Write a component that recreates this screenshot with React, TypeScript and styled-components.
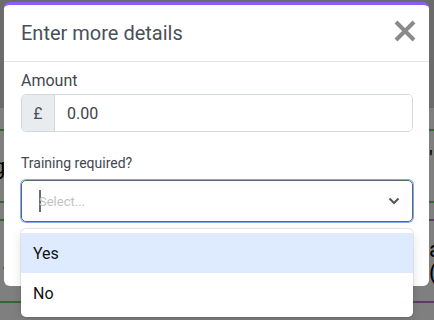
import React from "react";
import styled, { createGlobalStyle } from "styled-components";

const GlobalStyle = createGlobalStyle`
  html, body {
    margin: 0;
    padding: 0;
    overflow: hidden;
  }
  body {
    font-family: Roboto, "Liberation Sans", Arial, sans-serif;
    background: #ffffff;
  }
  * {
    box-sizing: border-box;
  }
`;

// page behind the dialog
const Page = styled.div`
  width: 100%;
  height: 100vh;
  background: #ffffff;
  overflow: hidden;
`;

const TopBand = styled.div`
  height: 108px;
  background: #d6d6d6;
`;

const Row = styled.div<{ h: number }>`
  display: flex;
  height: ${(p) => p.h}px;
`;

const Cell = styled.div<{ line: string; align?: string }>`
  flex: 1;
  display: flex;
  flex-direction: column;
  justify-content: ${(p) => p.align || "center"};
  border-bottom: 2px solid ${(p) => p.line};
  font-size: 22px;
  line-height: 23px;
  color: #000000;
  overflow: hidden;
  white-space: nowrap;
`;

const Frag = styled.span<{ indent: number; top?: number }>`
  margin-left: ${(p) => p.indent}px;
  margin-top: ${(p) => p.top || 0}px;
`;

// dialog
const Overlay = styled.div`
  position: fixed;
  inset: 0;
  background: rgba(0, 0, 0, 0.5);
  padding: 2px 5px 0 4px;
  display: flex;
  align-items: flex-start;
`;

const Modal = styled.div`
  width: 100%;
  background: #ffffff;
  border-radius: 6px;
  border-top: 3px solid #8b5cf6;
  position: relative;
`;

const Header = styled.div`
  display: flex;
  align-items: center;
  justify-content: space-between;
  padding: 16px 12px 16px 17px;
  border-bottom: 1px solid #e3e6ea;
`;

const Title = styled.h2`
  margin: 0;
  font-size: 20px;
  line-height: 24px;
  font-weight: 400;
  color: #4a5059;
`;

const CloseButton = styled.button`
  border: none;
  background: none;
  padding: 0;
  margin-top: -5px;
  display: flex;
  cursor: pointer;
`;

const Body = styled.div`
  padding: 9px 16px 64px 17px;
  display: flex;
  flex-direction: column;
`;

const Label = styled.label<{ size: number; gap: number; top?: number }>`
  font-size: ${(p) => p.size}px;
  line-height: ${(p) => p.size + 3}px;
  color: #42474f;
  margin-top: ${(p) => p.top || 0}px;
  margin-bottom: ${(p) => p.gap}px;
`;

const InputGroup = styled.div`
  display: flex;
  height: 38px;
  border: 1px solid #d3d8de;
  border-radius: 5px;
  overflow: hidden;
`;

const Prefix = styled.span`
  width: 33px;
  display: flex;
  align-items: center;
  justify-content: center;
  background: #e9ecef;
  border-right: 1px solid #d3d8de;
  font-size: 16px;
  color: #4a5059;
`;

const AmountInput = styled.input`
  flex: 1;
  border: none;
  outline: none;
  padding: 0 12px;
  font-family: Roboto, "Liberation Sans", Arial, sans-serif;
  font-size: 16px;
  color: #3d4249;
`;

const SelectWrap = styled.div`
  position: relative;
`;

const Control = styled.div`
  height: 42px;
  display: flex;
  align-items: center;
  justify-content: space-between;
  padding: 0 12px 0 17px;
  border: 1px solid #5b6573;
  border-radius: 5px;
  box-shadow: 0 0 0 1px #7eaef0;
`;

const Placeholder = styled.span`
  display: flex;
  align-items: center;
  font-size: 13px;
  color: #c2c2c2;
`;

const Caret = styled.span`
  width: 2px;
  height: 22px;
  background: #6b6b6b;
  margin-right: -2px;
`;

const Menu = styled.div`
  position: absolute;
  top: calc(100% + 7px);
  left: 0;
  right: 0;
  padding: 4px 0;
  background: #ffffff;
  border-radius: 5px;
  box-shadow: 0 0 0 1px rgba(0, 0, 0, 0.08), 0 4px 11px rgba(0, 0, 0, 0.12);
  z-index: 2;
`;

const Option = styled.div<{ focused?: boolean }>`
  height: 40px;
  display: flex;
  align-items: center;
  padding: 0 12px;
  font-size: 16px;
  color: #111111;
  background: ${(p) => (p.focused ? "#deebff" : "#ffffff")};
`;

const Close = () => (
  <svg width="24" height="24" viewBox="0 0 24 24">
    <path d="M3 3 L21 21 M21 3 L3 21" stroke="#8a8a8a" strokeWidth="4" />
  </svg>
);

const Chevron = () => (
  <svg width="12" height="8" viewBox="0 0 12 8">
    <path d="M1.5 1.5 L6 6 L10.5 1.5" fill="none" stroke="#555555" strokeWidth="2" />
  </svg>
);

export default function App() {
  return (
    <>
      <GlobalStyle />
      <Page>
        <TopBand />
        <Row h={23}>
          <Cell line="#66cc66" />
          <Cell line="#66cc66" />
        </Row>
        <Row h={72}>
          <Cell line="#66cc66">
            <Frag indent={-7}>g</Frag>
          </Cell>
          <Cell line="#66cc66" align="flex-start">
            <Frag indent={212} top={16}>'l</Frag>
          </Cell>
        </Row>
        <Row h={18}>
          <Cell line="#66cc66" />
          <Cell line="#c070d0" />
        </Row>
        <Row h={82}>
          <Cell line="#66cc66">
            <Frag indent={2}>.</Frag>
          </Cell>
          <Cell line="#c070d0">
            <Frag indent={212}>a</Frag>
            <Frag indent={212}>(</Frag>
          </Cell>
        </Row>
      </Page>
      <Overlay>
        <Modal>
          <Header>
            <Title>Enter more details</Title>
            <CloseButton aria-label="Close">
              <Close />
            </CloseButton>
          </Header>
          <Body>
            <Label size={16} gap={4}>
              Amount
            </Label>
            <InputGroup>
              <Prefix>£</Prefix>
              <AmountInput defaultValue="0.00" />
            </InputGroup>
            <Label size={14} gap={8} top={23}>
              Training required?
            </Label>
            <SelectWrap>
              <Control>
                <Placeholder>
                  <Caret />
                  Select...
                </Placeholder>
                <Chevron />
              </Control>
              <Menu>
                <Option focused>Yes</Option>
                <Option>No</Option>
              </Menu>
            </SelectWrap>
          </Body>
        </Modal>
      </Overlay>
    </>
  );
}
